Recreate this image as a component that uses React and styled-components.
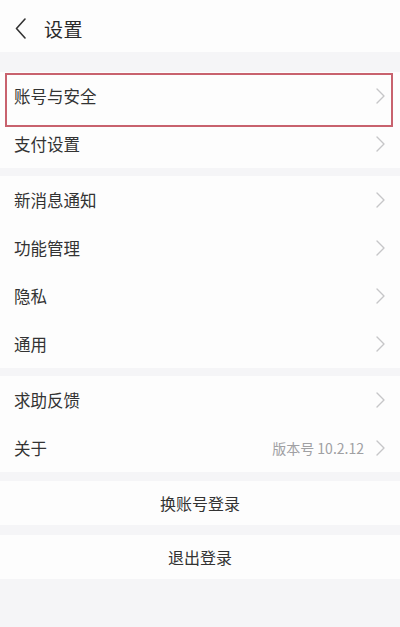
import React from 'react'
import styled, { createGlobalStyle } from 'styled-components'

const GlobalStyle = createGlobalStyle`
  html, body {
    margin: 0;
    padding: 0;
    background: #f5f5f7;
  }
  body {
    font-family: "Noto Sans CJK SC", "Noto Sans", sans-serif;
  }
`

const groups = [
  [
    { label: '账号与安全', marked: true },
    { label: '支付设置' },
  ],
  [
    { label: '新消息通知' },
    { label: '功能管理' },
    { label: '隐私' },
    { label: '通用' },
  ],
  [
    { label: '求助反馈' },
    { label: '关于', extra: '版本号 10.2.12' },
  ],
]

const Chevron = ({ color = '#c6c6c8', w = 9, h = 16, stroke = 1.4 }) => (
  <svg width={w} height={h} viewBox={`0 0 ${w} ${h}`} fill="none">
    <path d={`M1 1 L${w - 1} ${h / 2} L1 ${h - 1}`} stroke={color} strokeWidth={stroke} strokeLinecap="round" strokeLinejoin="round" />
  </svg>
)

const BackArrow = () => (
  <svg width="11" height="21" viewBox="0 0 11 21" fill="none">
    <path d="M10 1 L1.5 10.5 L10 20" stroke="#333" strokeWidth="1.6" strokeLinecap="round" strokeLinejoin="round" />
  </svg>
)

export default function App() {
  return (
    <Page>
      <GlobalStyle />
      <Header>
        <BackArrow />
        <Title>设置</Title>
      </Header>

      <List>
        {groups.map((items, gi) => (
          <Group key={gi}>
            {items.map((item) => (
              <Row key={item.label}>
                <Label>{item.label}</Label>
                <Right>
                  {item.extra && <Extra>{item.extra}</Extra>}
                  <Chevron />
                </Right>
                {item.marked && <Marker />}
              </Row>
            ))}
          </Group>
        ))}

        <Action $first>换账号登录</Action>
        <Action>退出登录</Action>
      </List>
    </Page>
  )
}

const Page = styled.div`
  width: 400px;
  min-height: 627px;
  background: #f5f5f7;
  color: #333;
`

const Header = styled.header`
  height: 52px;
  display: flex;
  align-items: center;
  gap: 18px;
  padding: 0 15px;
  background: #fdfdfd;
  box-sizing: border-box;
  padding-top: 4px;
`

const Title = styled.h1`
  margin: 0;
  font-size: 19px;
  font-weight: 400;
  color: #2a2a2a;
  letter-spacing: 0.5px;
`

const List = styled.div`
  display: flex;
  flex-direction: column;
  gap: 8px;
  padding-top: 20px;
`

const Group = styled.section`
  background: #fdfdfd;
  display: flex;
  flex-direction: column;
`

const Row = styled.div`
  position: relative;
  height: 48px;
  display: flex;
  align-items: center;
  justify-content: space-between;
  padding: 0 15px 0 14px;
`

const Label = styled.span`
  font-size: 16.5px;
  color: #333;
`

const Right = styled.div`
  display: flex;
  align-items: center;
  gap: 12px;
`

const Extra = styled.span`
  font-size: 14px;
  color: #a0a0a3;
`

const Marker = styled.div`
  position: absolute;
  left: 5px;
  right: 7px;
  top: 1px;
  height: 54px;
  border: 2px solid #c8626e;
  box-sizing: border-box;
  pointer-events: none;
`

const Action = styled.button`
  height: 44px;
  margin-top: ${(p) => (p.$first ? '1px' : '2px')};
  border: none;
  background: #fdfdfd;
  font-family: "Noto Sans CJK SC", "Noto Sans", sans-serif;
  font-size: 16px;
  color: #333;
  text-align: center;
`
